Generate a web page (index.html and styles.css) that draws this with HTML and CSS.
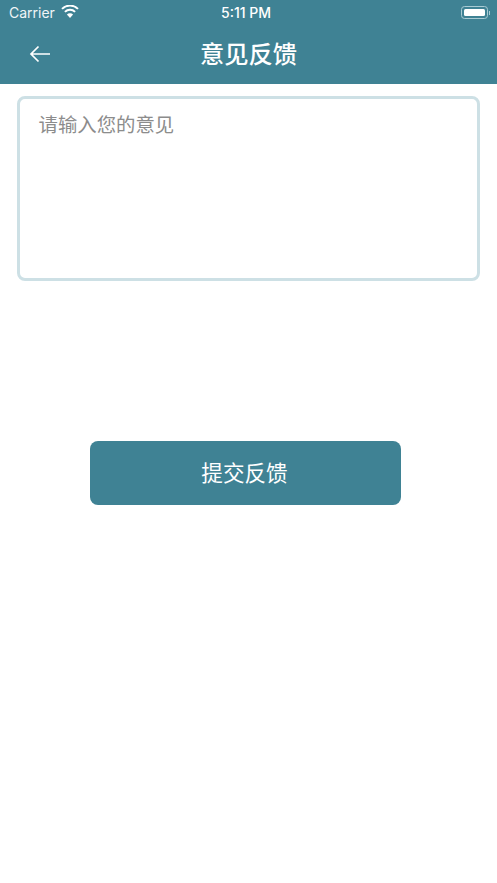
FILE: index.html
```html
<!DOCTYPE html>
<html lang="zh-CN">
<head>
    <meta charset="UTF-8">
    <meta name="viewport" content="width=device-width, initial-scale=1.0">
    <title>意见反馈</title>
    <link rel="stylesheet" href="styles.css">
</head>
<body>
    <div class="header">
        <div class="status-bar">
            <div class="status-left">
                <span class="carrier">Carrier</span>
                <svg class="wifi" width="18" height="13" viewBox="0 0 18 13">
                    <path d="M9 13 L5.9 9.5 A4.4 4.4 0 0 1 12.1 9.5 Z" fill="#fff"/>
                    <path d="M3.9 6.9 A7.4 7.4 0 0 1 14.1 6.9" fill="none" stroke="#fff" stroke-width="2"/>
                    <path d="M1 3.9 A11.4 11.4 0 0 1 17 3.9" fill="none" stroke="#fff" stroke-width="2"/>
                </svg>
            </div>
            <span class="time">5:11 PM</span>
            <div class="battery">
                <div class="battery-body"><div class="battery-level"></div></div>
                <div class="battery-cap"></div>
            </div>
        </div>
        <div class="nav-bar">
            <svg class="back" width="22" height="18" viewBox="0 0 22 18">
                <path d="M21 9 H2 M9.5 1.5 L2 9 L9.5 16.5" fill="none" stroke="#fff" stroke-width="1.7"/>
            </svg>
            <h1>意见反馈</h1>
        </div>
    </div>
    <div class="content">
        <textarea class="feedback" placeholder="请输入您的意见"></textarea>
        <button class="submit">提交反馈</button>
    </div>
</body>
</html>
```

FILE: styles.css
```css
* {
    box-sizing: border-box;
}
body {
    margin: 0;
    background: #fff;
    font-family: "Liberation Sans", "Noto Sans CJK SC", sans-serif;
}
.header {
    height: 84px;
    background: #3f8294;
    color: #fff;
}
.status-bar {
    height: 25px;
    padding: 0 7px 0 9px;
    display: flex;
    align-items: center;
    justify-content: space-between;
    position: relative;
}
.status-left {
    display: flex;
    align-items: center;
    gap: 6px;
}
.carrier {
    font-family: Inter, "Liberation Sans", sans-serif;
    font-size: 14px;
    color: #f0f5f7;
}
.wifi {
    margin-top: -2px;
}
.time {
    position: absolute;
    left: 221px;
    top: 4px;
    font-family: Inter, "Liberation Sans", sans-serif;
    font-size: 14px;
    font-weight: 500;
}
.battery {
    display: flex;
    align-items: center;
}
.battery-body {
    width: 27px;
    height: 13px;
    padding: 2px;
    border: 1px solid #a9cbd4;
    border-radius: 3.5px;
}
.battery-level {
    height: 100%;
    background: #fff;
    border-radius: 1.5px;
}
.battery-cap {
    width: 1px;
    height: 4px;
    margin-left: 1px;
    background: #a9cbd4;
}
.nav-bar {
    height: 59px;
    position: relative;
    display: flex;
    align-items: center;
    justify-content: center;
}
.back {
    position: absolute;
    left: 29px;
    top: 20px;
}
h1 {
    margin: 0 0 4px;
    font-family: "Noto Sans CJK SC", sans-serif;
    font-size: 24.3px;
    font-weight: 500;
    line-height: 32px;
}
.content {
    padding: 12px 17px 0;
    display: flex;
    flex-direction: column;
}
.feedback {
    display: block;
    width: 463px;
    height: 185px;
    padding: 10px 18.5px;
    border: 3px solid #cde0e5;
    border-radius: 8px;
    outline: none;
    resize: none;
    font-family: "Noto Sans CJK SC", sans-serif;
    font-size: 19.4px;
    line-height: 30px;
}
.feedback::placeholder {
    color: #8c8c8c;
    opacity: 1;
}
.submit {
    width: 311px;
    height: 64px;
    margin: 160px 0 0 73px;
    padding: 0 2px 4px 0;
    background: #3f8294;
    color: #fff;
    border: none;
    border-radius: 8px;
    font-family: "Noto Sans CJK SC", sans-serif;
    font-size: 21.6px;
}
```
